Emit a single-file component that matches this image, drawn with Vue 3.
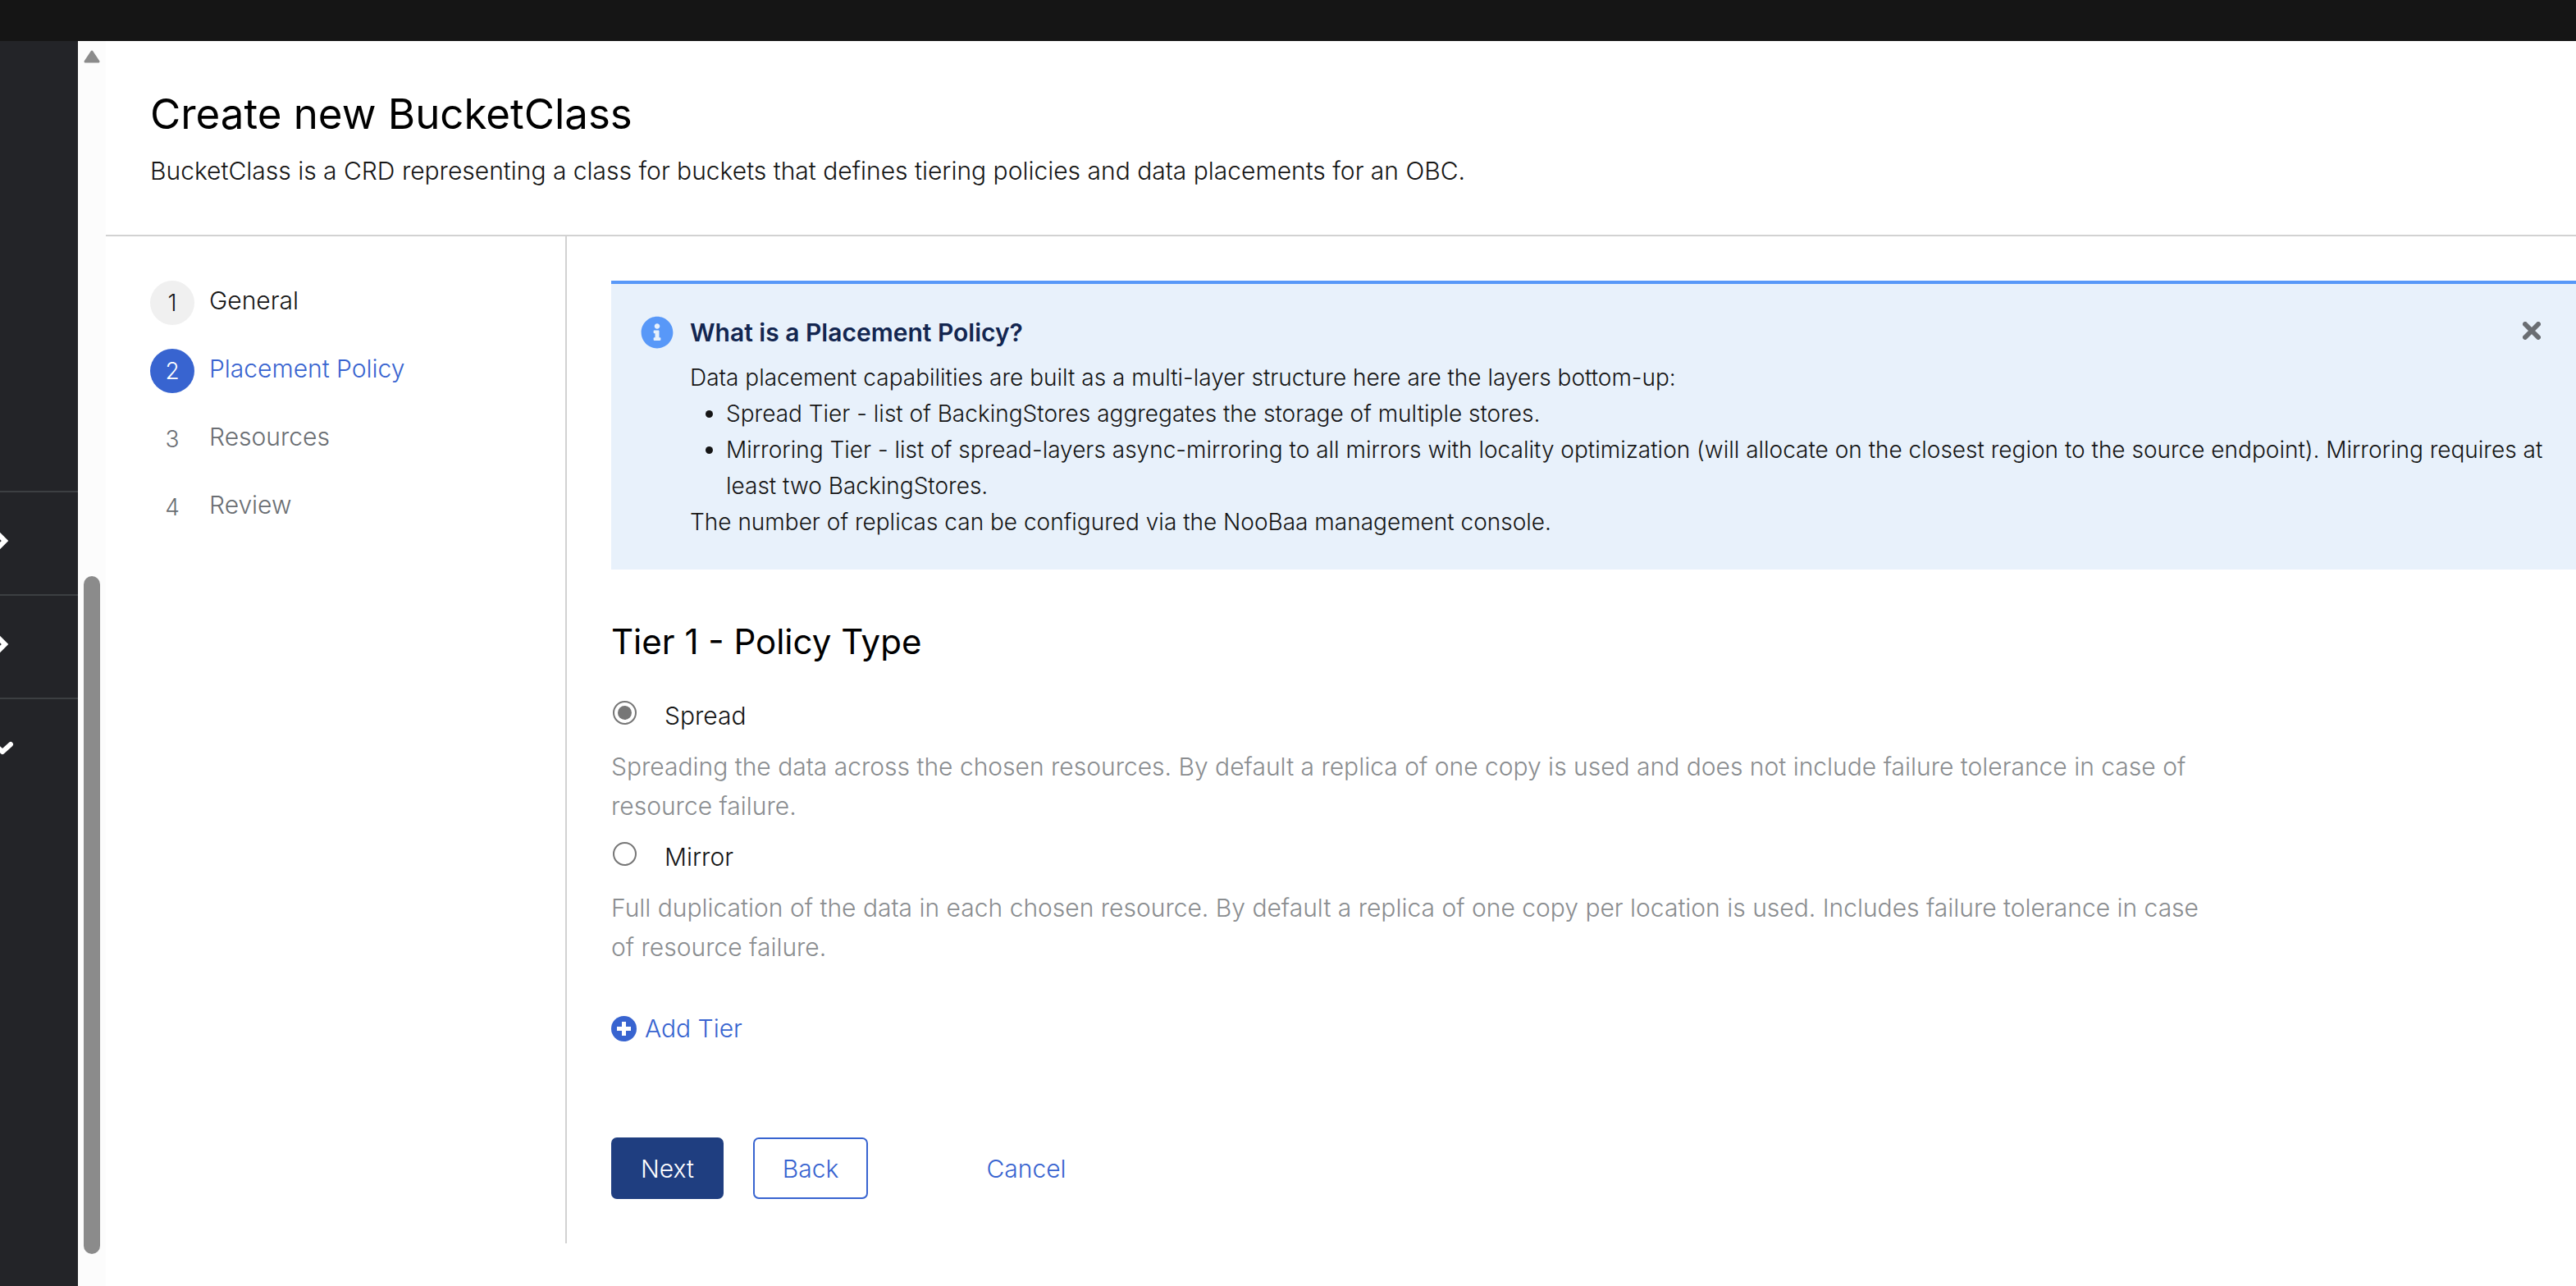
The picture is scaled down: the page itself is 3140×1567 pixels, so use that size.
<script setup>
import { ref } from 'vue'

const steps = [
  { label: 'General', state: 'done' },
  { label: 'Placement Policy', state: 'current' },
  { label: 'Resources', state: 'pending' },
  { label: 'Review', state: 'pending' },
]

const policies = [
  {
    value: 'spread',
    label: 'Spread',
    description:
      'Spreading the data across the chosen resources. By default a replica of one copy is used and does not include failure tolerance in case of resource failure.',
  },
  {
    value: 'mirror',
    label: 'Mirror',
    description:
      'Full duplication of the data in each chosen resource. By default a replica of one copy per location is used. Includes failure tolerance in case of resource failure.',
  },
]

const policy = ref('spread')
</script>

<template>
  <div class="console">
    <header class="masthead"></header>
    <div class="shell">
      <aside class="sidebar">
        <div class="sidebar-spacer"></div>
        <button class="nav-toggle" type="button" aria-label="Expand section">
          <svg width="18" height="36" viewBox="0 0 18 36"><path d="M-8 4L6 18L-8 32" /></svg>
        </button>
        <button class="nav-toggle" type="button" aria-label="Expand section">
          <svg width="18" height="36" viewBox="0 0 18 36"><path d="M-8 4L6 18L-8 32" /></svg>
        </button>
        <button class="nav-toggle" type="button" aria-label="Collapse section">
          <svg class="down" width="18" height="36" viewBox="0 0 18 36"><path d="M-8 13L3 23L13 14" /></svg>
        </button>
      </aside>

      <div class="scrollbar" aria-hidden="true">
        <svg width="22" height="16" viewBox="0 0 22 16">
          <path d="M11 2L19 14H3Z" fill="#8b8b8b" stroke="#8b8b8b" stroke-width="3" stroke-linejoin="round" />
        </svg>
        <div class="thumb"></div>
      </div>

      <main class="page">
        <div class="page-header">
          <h1>Create new BucketClass</h1>
          <p>BucketClass is a CRD representing a class for buckets that defines tiering policies and data placements for an OBC.</p>
        </div>

        <div class="wizard">
          <nav class="wizard-nav" aria-label="Wizard steps">
            <ol>
              <li v-for="(step, i) in steps" :key="step.label" :class="step.state">
                <a href="#">
                  <span class="number">{{ i + 1 }}</span>
                  <span class="label">{{ step.label }}</span>
                </a>
              </li>
            </ol>
          </nav>

          <form class="wizard-body" @submit.prevent>
            <section class="alert">
              <svg class="info" width="40" height="40" viewBox="0 0 512 512" aria-hidden="true">
                <path
                  fill="#5898f8"
                  d="M256 8C119 8 8 119 8 256s111 248 248 248 248-111 248-248S393 8 256 8zm0 110c23.200 0 42 18.800 42 42s-18.800 42-42 42-42-18.800-42-42 18.800-42 42-42zm56 254c0 6.600-5.400 12-12 12h-88c-6.600 0-12-5.400-12-12v-24c0-6.600 5.400-12 12-12h12v-64h-12c-6.600 0-12-5.400-12-12v-24c0-6.600 5.400-12 12-12h64c6.600 0 12 5.400 12 12v100h12c6.600 0 12 5.400 12 12z"
                />
              </svg>
              <div class="alert-text">
                <h2>What is a Placement Policy?</h2>
                <p>Data placement capabilities are built as a multi-layer structure here are the layers bottom-up:</p>
                <ul>
                  <li>Spread Tier - list of BackingStores aggregates the storage of multiple stores.</li>
                  <li>
                    Mirroring Tier - list of spread-layers async-mirroring to all mirrors with locality optimization
                    (will allocate on the closest region to the source endpoint). Mirroring requires at least two
                    BackingStores.
                  </li>
                </ul>
                <p>The number of replicas can be configured via the NooBaa management console.</p>
              </div>
              <button class="close" type="button" aria-label="Close">
                <svg width="22" height="22" viewBox="0 0 22 22"><path d="M3 3L19 19M19 3L3 19" /></svg>
              </button>
            </section>

            <h2 class="tier-title">Tier 1 - Policy Type</h2>
            <div v-for="p in policies" :key="p.value" class="policy">
              <div class="policy-row">
                <input :id="p.value" v-model="policy" type="radio" name="policy" :value="p.value" />
                <label :for="p.value">{{ p.label }}</label>
              </div>
              <p>{{ p.description }}</p>
            </div>

            <button class="add-tier" type="button">
              <svg width="31" height="31" viewBox="0 0 31 31" aria-hidden="true">
                <circle cx="15.500" cy="15.500" r="15.500" fill="#3864d0" />
                <path d="M15.500 7V24M7 15.500H24" stroke="#fff" stroke-width="5" />
              </svg>
              Add Tier
            </button>

            <div class="actions">
              <button class="btn primary" type="submit">Next</button>
              <button class="btn secondary" type="button">Back</button>
              <button class="btn link" type="button">Cancel</button>
            </div>
          </form>
        </div>
      </main>
    </div>
  </div>
</template>

<style>
body {
  margin: 0;
  overflow: hidden;
}
</style>

<style scoped>
.console {
  display: flex;
  flex-direction: column;
  height: 100vh;
  background: #fff;
  color: #151515;
  font-family: Inter, "Open Sans", sans-serif;
  font-size: 30px;
  font-weight: 300;
  line-height: 48px;
}

h1,
h2,
p,
ol,
ul {
  margin: 0;
  padding: 0;
}

button {
  margin: 0;
  padding: 0;
  border: 0;
  background: none;
  color: inherit;
  font: inherit;
  cursor: pointer;
}

svg {
  display: block;
  flex: none;
}

.masthead {
  flex: none;
  height: 50px;
  background: #151515;
}

.shell {
  display: flex;
  flex: 1;
  min-height: 0;
}

/* Sidebar */
.sidebar {
  display: flex;
  flex-direction: column;
  flex: none;
  width: 95px;
  background: #232428;
}

.sidebar-spacer {
  height: 548px;
}

.nav-toggle {
  display: flex;
  align-items: center;
  height: 126px;
  box-sizing: border-box;
  padding-bottom: 6px;
  border-top: 2px solid #3c3f42;
}

.nav-toggle path {
  fill: none;
  stroke: #fff;
  stroke-width: 6;
}

.nav-toggle .down path {
  stroke-linecap: round;
  stroke-linejoin: round;
}

/* Scrollbar */
.scrollbar {
  display: flex;
  flex-direction: column;
  align-items: center;
  flex: none;
  box-sizing: border-box;
  width: 34px;
  padding: 11px 0 39px;
  background: #fcfcfc;
}

.thumb {
  flex: 1;
  width: 20px;
  margin-top: 625px;
  border-radius: 10px;
  background: #8b8b8b;
}

/* Page */
.page {
  flex: 1;
  min-width: 0;
}

.page-header {
  padding: 54px;
  border-bottom: 2px solid #d2d2d2;
}

h1 {
  margin-bottom: 10px;
  color: #000;
  font-size: 51px;
  font-weight: 400;
  line-height: 70px;
}

.wizard {
  display: flex;
}

.wizard-nav {
  flex: none;
  box-sizing: border-box;
  width: 562px;
  padding: 54px;
  border-right: 2px solid #d2d2d2;
}

.wizard-nav ol {
  display: flex;
  flex-direction: column;
  gap: 29px;
  list-style: none;
}

.wizard-nav a {
  display: flex;
  gap: 18px;
  color: #151515;
  text-decoration: none;
}

.number {
  width: 54px;
  height: 54px;
  border-radius: 50%;
  font-size: 28px;
  line-height: 54px;
  text-align: center;
}

.done .number {
  background: #f0f0f0;
}

.current a {
  color: #3864d0;
}

.current .number {
  background: #3864d0;
  color: #fff;
}

.pending a {
  color: #6a6e73;
}

.wizard-body {
  flex: 1;
  min-width: 0;
  padding: 54px 0 54px 54px;
}

/* Alert */
.alert {
  display: flex;
  align-items: flex-start;
  padding: 37px 43px 36px 36px;
  border-top: 4px solid #5898f8;
  background: #e8f1fb;
  font-size: 28px;
  line-height: 44px;
}

.info {
  margin-top: 2px;
}

.alert-text {
  flex: 1;
  min-width: 0;
  margin: 0 -36px 0 20px;
}

.alert h2 {
  margin-bottom: 11px;
  color: #132650;
  font-size: 30px;
  font-weight: 600;
}

.alert ul {
  padding-left: 44px;
}

.close {
  padding-top: 9px;
}

.close path {
  fill: none;
  stroke: #6a6e73;
  stroke-width: 6;
  stroke-linecap: round;
}

/* Policy form */
.tier-title {
  margin: 58px 0 36px;
  color: #000;
  font-size: 42px;
  font-weight: 400;
  line-height: 60px;
}

.policy {
  max-width: 81%;
  margin-bottom: 14px;
}

.policy-row {
  display: flex;
  align-items: flex-start;
  gap: 34px;
  margin-bottom: 14px;
}

.policy-row input {
  width: 29px;
  height: 29px;
  box-sizing: border-box;
  margin: 6px 0 0 2px;
  padding: 4px;
  border: 2px solid #767676;
  border-radius: 50%;
  appearance: none;
  background: #fff;
}

.policy-row input:checked {
  background: #767676 content-box;
}

.policy p {
  color: #8a8d90;
}

.add-tier {
  display: flex;
  align-items: center;
  gap: 10px;
  margin-top: 51px;
  color: #3864d0;
}

.actions {
  display: flex;
  gap: 36px;
  margin-top: 109px;
}

.btn {
  box-sizing: border-box;
  height: 75px;
  padding: 0 36px;
  border-radius: 7px;
}

.primary {
  background: #1f3e80;
  color: #fff;
}

.secondary {
  padding: 0 34px;
  border: 2px solid #3864d0;
  color: #3864d0;
}

.link {
  margin-left: 72px;
  color: #3864d0;
}
</style>
